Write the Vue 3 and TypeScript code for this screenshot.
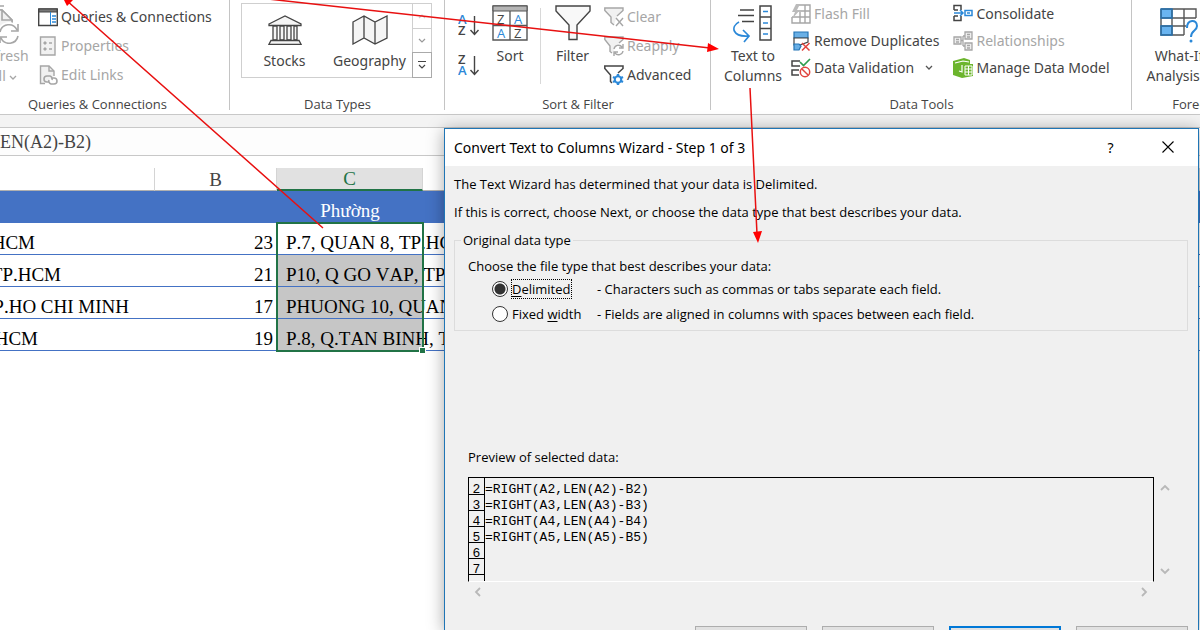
<script setup lang="ts">
import { ref } from 'vue'

interface SheetRow {
  address: string
  visible: number
  count: number
  ward: string
}

const rows: SheetRow[] = [
  { address: 'TP.HCM', visible: 35, count: 23, ward: 'P.7, QUAN 8, TP.HCM' },
  { address: 'TP.HCM', visible: 61, count: 21, ward: 'P10, Q GO VAP, TP.HCM' },
  { address: 'TP.HO CHI MINH', visible: 129, count: 17, ward: 'PHUONG 10, QUAN 3' },
  { address: 'TP.HCM', visible: 38, count: 19, ward: 'P.8, Q.TAN BINH, TP.HCM' },
]

const preview = [2, 3, 4, 5, 6, 7].map((n) => ({
  n,
  text: n < 6 ? `=RIGHT(A${n},LEN(A${n})-B${n})` : '',
}))

const fileType = ref('delimited')
const formula = ref('EN(A2)-B2)')
</script>

<template>
  <div class="app">
    <header class="ribbon">
      <section class="group queries">
        <div class="tools">
          <button class="big refresh off">
            <svg width="40" height="44" viewBox="0 0 40 44" fill="none" stroke="#a6a6a6" stroke-width="1.600">
              <path d="M0 6H20M0 10H18L28 20V26" />
              <path d="M0 10H18L28 20V40H0Z" fill="#f1f1f1" stroke="none" />
              <path d="M0 10H18L28 20V26M18 10V20H28" />
              <circle cx="25" cy="34" r="12" fill="#fff" stroke="none" />
              <path d="M16 32A9 9 0 0 1 33 30M34 24V31H27M34 36A9 9 0 0 1 17 38M16 43V37H23" />
              <path d="M0 40H12" />
            </svg>
            <span>Refresh</span>
            <span>All <svg class="chev" width="8" height="6" viewBox="0 0 8 6"><path d="M1 1L4 4L7 1" /></svg></span>
          </button>
          <div class="list">
            <button>
              <svg width="20" height="20" viewBox="0 0 20 20" fill="none"><path d="M.7 2H19.3V18.500H.7Z" fill="#fff" stroke="#444" stroke-width="1.400" /><path d="M1 2H19V5H1Z" fill="#777" stroke="#444" /><path d="M12.500 5V18" stroke="#2b88d8" /><path d="M14 9H18M14 12H18M14 15H18" stroke="#2b88d8" stroke-width="1.500" /></svg>
              Queries &amp; Connections
            </button>
            <button class="off">
              <svg width="20" height="20" viewBox="0 0 20 20" fill="none" stroke="#a6a6a6"><path d="M2.500 1H17V19H2.500Z" fill="#f1f1f1" stroke-width="1.400" /><path d="M6 6H8V8H6ZM6 12H8V14H6Z" fill="#a6a6a6" /><path d="M11 7H14M11 13H14" stroke-width="1.500" /></svg>
              Properties
            </button>
            <button class="off">
              <svg width="20" height="20" viewBox="0 0 20 20" fill="none" stroke="#a6a6a6" stroke-width="1.400"><path d="M7 18.500H2.500V1H11L16 6V11" fill="#f1f1f1" /><path d="M11 1V6H16" /><path d="M11 17H9A3 3 0 0 1 9 11H12A3 3 0 0 1 14 15M13 13H16A3 3 0 0 1 16 19H13A3 3 0 0 1 11 15" stroke-width="1.600" /></svg>
              Edit Links
            </button>
          </div>
        </div>
        <h2>Queries &amp; Connections</h2>
      </section>

      <section class="group types">
        <div class="tools">
          <div class="gallery">
            <button class="tile">
              <svg width="34" height="30" viewBox="0 0 34 30" fill="#f5f5f5" stroke="#444" stroke-width="1.300"><path d="M1 9L17 1L33 9V10.500H1Z" /><path d="M5 11H9V25H5ZM12 11H16V25H12ZM19 11H23V25H19ZM26 11H29V25H26Z" /><path d="M3 25.500H31L33 29.300H1Z" /></svg>
              <span>Stocks</span>
            </button>
            <button class="tile">
              <svg width="36" height="30" viewBox="0 0 36 30" fill="#f5f5f5" stroke="#444" stroke-width="1.300"><path d="M1 7L12 1L23 7L35 1V23L23 29L12 23L1 29ZM12 1V23M23 7V29" /></svg>
              <span>Geography</span>
            </button>
            <div class="spin">
              <button aria-label="Previous row"><svg width="8" height="6" viewBox="0 0 8 6"><path d="M1 5L4 2L7 5" stroke="#ccc" /></svg></button>
              <button aria-label="Next row"><svg width="8" height="6" viewBox="0 0 8 6"><path d="M1 1L4 4L7 1" stroke="#999" /></svg></button>
              <button class="more" aria-label="More data types"><svg width="10" height="10" viewBox="0 0 10 10"><path d="M1 1.500H9M2 5L5 8L8 5" stroke="#444" /></svg></button>
            </div>
          </div>
        </div>
        <h2>Data Types</h2>
      </section>

      <section class="group sorting">
        <div class="tools">
          <div class="az">
            <button aria-label="Sort A to Z">
              <svg width="22" height="24" viewBox="0 0 22 24"><text x="0" y="10" class="blue">A</text><text x="0" y="21">Z</text><path d="M16.500 2V20M12.500 16L16.500 20.500L20.500 16" /></svg>
            </button>
            <button aria-label="Sort Z to A">
              <svg width="22" height="24" viewBox="0 0 22 24"><text x="0" y="10">Z</text><text x="0" y="21" class="blue">A</text><path d="M16.500 2V20M12.500 16L16.500 20.500L20.500 16" /></svg>
            </button>
          </div>
          <button class="big sort">
            <svg width="36" height="36" viewBox="0 0 36 36"><path d="M1 1H35V35H1Z" fill="#fff" stroke="#555" stroke-width="1.400" /><path d="M1 1H35V6H1Z" fill="#b5b5b5" stroke="#555" /><path d="M18 6V35M1 20.500H35" stroke="#555" stroke-width="1.300" /><text x="5" y="19">Z</text><text x="22" y="19" class="blue">A</text><text x="5" y="33" class="blue">A</text><text x="22" y="33">Z</text></svg>
            <span>Sort</span>
          </button>
          <button class="big filter">
            <svg width="36" height="36" viewBox="0 0 36 36"><path d="M1 1H35V6L22 20V34.500H14V20L1 6Z" fill="#f8f8f8" stroke="#444" stroke-width="1.400" /></svg>
            <span>Filter</span>
          </button>
          <div class="list">
            <button class="off">
              <svg width="20" height="20" viewBox="0 0 20 20" fill="none" stroke="#a6a6a6" stroke-width="1.400"><path d="M10 18L7 15.500V10L.8 3.500V1H19V3.500L13 9" fill="#f1f1f1" /><path d="M12 11L19 19M19 11L12 19" /></svg>
              Clear
            </button>
            <button class="off">
              <svg width="20" height="20" viewBox="0 0 20 20" fill="none" stroke="#a6a6a6" stroke-width="1.400"><path d="M8 17L6 15.500V10L.8 3.500V1H19V3.500L15 7" fill="#f1f1f1" /><path d="M10 13A4.500 4.500 0 0 1 18 11M19 8V12H15M19 15A4.500 4.500 0 0 1 11 17M10 20V16H14" /></svg>
              Reapply
            </button>
            <button>
              <svg width="20" height="20" viewBox="0 0 20 20" fill="none" stroke="#444" stroke-width="1.500"><path d="M8 18L6.500 16.500V10L.8 3.500V1H19V3.500L14 8" /><circle cx="14" cy="14.500" r="3.200" stroke="#2b88d8" stroke-width="2" /><path d="M14 9V11M14 18V20M9 12L11 13M17 16L19 17M9 17L11 16M17 13L19 12" stroke="#2b88d8" stroke-width="2.400" /></svg>
              Advanced
            </button>
          </div>
        </div>
        <h2>Sort &amp; Filter</h2>
      </section>

      <section class="group data">
        <div class="tools">
          <button class="big split">
            <svg width="40" height="38" viewBox="0 0 40 38" fill="none" stroke="#444" stroke-width="1.400"><path d="M7 5H21M5 10.500H21M9 16.500H21" /><path d="M27 1H38V35H27ZM27 12H38M27 23.500H38" stroke-width="1.500" /><path d="M30 6.500H35M30 18H35M30 29H35M6 17C-3 22 0 32 15 31M10 25L16 31L11 37" stroke="#2b88d8" stroke-width="1.700" /></svg>
            <span>Text to</span>
            <span>Columns</span>
          </button>
          <div class="list tight">
            <button class="off">
              <svg width="20" height="20" viewBox="0 0 20 20" fill="none" stroke="#a6a6a6" stroke-width="1.400"><path d="M8 1H19V19H1V13M14 1V19M9 8V19M7 7H19M1 13H19" /><path d="M5 0L1 8H4L1 15L9 6H6L9 0Z" fill="#bbb" stroke="none" /></svg>
              Flash Fill
            </button>
            <button>
              <svg width="20" height="20" viewBox="0 0 20 20" fill="none" stroke="#444" stroke-width="1.200"><path d="M3 1H17V7H3Z" fill="#69afe5" stroke="#2474b5" /><path d="M3 7H17V11L9 14H3Z" fill="#fff" /><path d="M3 13H8L10 15L8 19H3Z" fill="#69afe5" stroke="#2474b5" /><path d="M11 12L18.500 19.500M18.500 12L11 19.500" stroke="#e0443e" stroke-width="1.500" /></svg>
              Remove Duplicates
            </button>
            <button>
              <svg width="20" height="20" viewBox="0 0 20 20" fill="none" stroke="#444" stroke-width="1.500"><path d="M9 3H1V8H9M8 12H1V17H8" /><path d="M9 4L12.500 7.500L19 1" stroke="#2e9e4f" stroke-width="1.700" /><circle cx="14" cy="14" r="4.700" stroke="#e0443e" /><path d="M10.700 10.700L17.300 17.300" stroke="#e0443e" /></svg>
              Data Validation
              <svg class="chev drop" width="8" height="6" viewBox="0 0 8 6"><path d="M1 1L4 4L7 1" /></svg>
            </button>
          </div>
          <div class="list tight second">
            <button>
              <svg width="20" height="20" viewBox="0 0 20 20" fill="none" stroke="#444" stroke-width="1.500"><path d="M1 6V1.500H8V6M1 12V16.500H8V12M1 6H5M1 12H5" /><path d="M1 9H10M7 6L10 9L7 12M12 6.500H19V11.500H12ZM14 9H17" stroke="#2b88d8" /></svg>
              Consolidate
            </button>
            <button class="off">
              <svg width="20" height="20" viewBox="0 0 20 20" fill="#eee" stroke="#a6a6a6" stroke-width="1.300"><path d="M1 6H8V13H1ZM12 1H19V8H12ZM12 12H19V19H12ZM8 9.500H10M10 5V15M10 5H12M10 15H12M3 8.500H6M3 11H6M14 3.500H17M14 6H17M14 14.500H17M14 17H17" /></svg>
              Relationships
            </button>
            <button>
              <svg width="20" height="20" viewBox="0 0 20 20" fill="none"><path d="M0 3L11 0L17 2V6H20V18L9 20L0 17Z" fill="#6cb52d" /><path d="M2 5L10 3L16 4M9 7V14L6 13" stroke="#fff" stroke-width="1.200" /><path d="M12 8H19V17H12ZM12 11H19M12 14H19M15.500 8V17" stroke="#fff" /></svg>
              Manage Data Model
            </button>
          </div>
        </div>
        <h2>Data Tools</h2>
      </section>

      <section class="group forecast">
        <div class="tools">
          <button class="big whatif">
            <svg width="38" height="36" viewBox="0 0 38 36" fill="none"><path d="M1 1H12V10H1ZM1 18H12V27H1Z" fill="#69b4f0" /><path d="M1 1H36V10M1 1V27H24M1 10H36M1 18H26M12 1V27M24 1V27" stroke="#555" stroke-width="1.400" /><path d="M1 1H12V10H1ZM1 18H12V27H1Z" stroke="#2474b5" stroke-width="1.400" /><path d="M27 20C27 11 37 11 37 18C37 23 31 22 31 29" stroke="#2b88d8" stroke-width="2" /><circle cx="31" cy="33" r="1.500" fill="#2b88d8" /></svg>
            <span>What-If</span>
            <span>Analysis <svg class="chev" width="8" height="6" viewBox="0 0 8 6"><path d="M1 1L4 4L7 1" /></svg></span>
          </button>
        </div>
        <h2>Forecast</h2>
      </section>
    </header>

    <div class="formula"><input v-model="formula" aria-label="Formula bar" /></div>

    <main class="sheet">
      <table>
        <colgroup><col class="a" /><col class="b" /><col class="c" /><col /></colgroup>
        <thead>
          <tr class="letters"><th></th><th>B</th><th class="on">C</th><th></th></tr>
          <tr class="heading"><th></th><th></th><th>Phường</th><th></th></tr>
        </thead>
        <tbody>
          <tr v-for="(row, i) in rows" :key="i">
            <td><div class="clip" :style="{ width: row.visible + 'px' }">{{ row.address }}</div></td>
            <td class="num">{{ row.count }}</td>
            <td class="ward" :class="{ shaded: i > 0 }">{{ row.ward }}<i v-if="i === 0" class="selection"></i></td>
            <td></td>
          </tr>
        </tbody>
      </table>
    </main>

    <div class="dialog" role="dialog" aria-labelledby="wizard-title">
      <div class="titlebar">
        <h1 id="wizard-title">Convert Text to Columns Wizard - Step 1 of 3</h1>
        <button aria-label="Help">?</button>
        <button aria-label="Close"><svg width="12" height="12" viewBox="0 0 12 12"><path d="M.5 .5L11.500 11.500M11.500 .5L.5 11.500" stroke="#000" stroke-width="1.100" /></svg></button>
      </div>
      <div class="body">
        <p>The Text Wizard has determined that your data is Delimited.</p>
        <p>If this is correct, choose Next, or choose the data type that best describes your data.</p>
        <fieldset>
          <legend>Original data type</legend>
          <p class="hint">Choose the file type that best describes your data:</p>
          <div class="choice">
            <input id="delimited" v-model="fileType" type="radio" name="kind" value="delimited" />
            <label for="delimited"><span class="focus"><u>D</u>elimited</span></label>
            <span>- Characters such as commas or tabs separate each field.</span>
          </div>
          <div class="choice">
            <input id="fixed" v-model="fileType" type="radio" name="kind" value="fixed" />
            <label for="fixed"><span>Fixed <u>w</u>idth</span></label>
            <span>- Fields are aligned in columns with spaces between each field.</span>
          </div>
        </fieldset>
        <p class="caption">Preview of selected data:</p>
        <div class="preview">
          <div class="pane">
            <div v-for="line in preview" :key="line.n" class="line"><b>{{ line.n }}</b><span>{{ line.text }}</span></div>
            <div class="line"><b></b></div>
          </div>
          <div class="vbar">
            <button aria-label="Scroll up"><svg width="10" height="7" viewBox="0 0 10 7"><path d="M1 6L5 2L9 6" /></svg></button>
            <button aria-label="Scroll down"><svg width="10" height="7" viewBox="0 0 10 7"><path d="M1 1L5 5L9 1" /></svg></button>
          </div>
          <div class="hbar">
            <button aria-label="Scroll left"><svg width="7" height="10" viewBox="0 0 7 10"><path d="M6 1L2 5L6 9" /></svg></button>
            <button aria-label="Scroll right"><svg width="7" height="10" viewBox="0 0 7 10"><path d="M1 1L5 5L1 9" /></svg></button>
          </div>
        </div>
        <div class="actions">
          <button aria-label="Cancel"></button>
          <button aria-label="Back"></button>
          <button class="primary" aria-label="Next"></button>
          <button aria-label="Finish"></button>
        </div>
      </div>
    </div>

    <svg class="arrows" width="1200" height="630" viewBox="0 0 1200 630" fill="none" stroke="#e81010" stroke-width="1.500">
      <path d="M323 228L66 0M268 -1L710 48M750 88L757 234" />
      <path d="M62 -4L73 0L67 6ZM719 49L707 52L708 43ZM758 243L753 232L762 231Z" fill="#f00" stroke="none" />
    </svg>
  </div>
</template>

<style>
body { margin: 0; }
</style>

<style scoped>
.app { position: relative; height: 100vh; overflow: hidden; background: #fff; color: #444; font-family: "Noto Sans", "Open Sans", sans-serif; font-size: 14px; line-height: 20px; }
button { padding: 0; border: 0; background: none; color: inherit; font: inherit; white-space: nowrap; }
h1, h2, p { margin: 0; font-weight: 400; }
svg { flex: none; }

.ribbon { display: flex; height: 114px; border-bottom: 1px solid #c8c8c8; overflow: hidden; }
.group { flex: none; display: flex; flex-direction: column; box-sizing: border-box; background: linear-gradient(#c4c4c4, #c4c4c4) right top / 1px 110px no-repeat; }
.tools { display: flex; height: 94px; }
.group h2 { font: 13px/20px "Open Sans", sans-serif; text-align: center; }
.queries { width: 265px; margin-left: -35px; }
.types { width: 215px; }
.sorting { width: 266px; }
.data { width: 421px; }
.forecast { flex: 1 0 132px; background: none; }
.big { display: flex; flex-direction: column; align-items: center; }
.big > span { height: 20px; }
.big > svg { margin-top: 5px; margin-bottom: 5px; }
.off { color: #a6a6a6; }
.chev path { fill: none; stroke: #555; stroke-width: 1.300; }
.off .chev path { stroke: #a6a6a6; }
.refresh { width: 73px; padding-left: 4px; }
.refresh > svg { margin: 0 0 2px; }
.list { display: flex; flex-direction: column; padding-top: 7px; gap: 9px; }
.list button { display: flex; align-items: center; gap: 3px; height: 20px; }
.list.tight { padding-top: 4px; gap: 7px; }
.list .drop { margin-left: 8px; }

.gallery { display: flex; box-sizing: border-box; width: 191px; height: 75px; margin: 3px 0 0 11px; border: 1px solid #cfcfcf; }
.tile { flex: 1; display: flex; flex-direction: column; align-items: center; gap: 6px; padding-top: 11px; }
.spin { display: flex; flex-direction: column; width: 18px; border-left: 1px solid #cfcfcf; }
.spin button { flex: 1; display: flex; align-items: center; justify-content: center; border-bottom: 1px solid #cfcfcf; }
.spin .more { border: 1px solid #aaa; margin: -1px; }
.spin path { fill: none; stroke-width: 1.200; }

.az { display: flex; flex-direction: column; gap: 16px; padding: 14px 0 0 13px; width: 22px; }
.az button, .az svg { display: block; height: 24px; }
.az text, .sort text { font: 13px "Open Sans", sans-serif; fill: #444; }
.az text { font-weight: 600; }
.az text.blue, .sort text.blue { fill: #2b88d8; }
.az path { fill: none; stroke: #444; stroke-width: 1.400; }
.sort { box-sizing: border-box; width: 61px; padding-right: 1px; background: linear-gradient(#d8d8d8, #d8d8d8) right 8px / 1px 76px no-repeat; }
.filter { width: 63px; }
.split { width: 80px; box-sizing: border-box; padding-left: 4px; }
.split > svg { margin-bottom: 3px; }
.whatif { width: 94px; }
.whatif > svg { margin-top: 8px; margin-bottom: 2px; }
.second { margin-left: 14px; }

.formula { margin-top: 12px; border: solid #c8c8c8; border-width: 1px 0; height: 27px; background: #fdfdfd; box-shadow: 0 -12px #f3f3f3; }
.formula input { box-sizing: border-box; width: 100%; height: 27px; padding: 2px 0 0; border: 0; background: none; color: #444; font: 18px "Liberation Serif", serif; }

.sheet { padding-top: 12px; color: #000; font: 19px/24px "Liberation Serif", serif; font-kerning: none; }
table { width: 100%; table-layout: fixed; border-collapse: separate; border-spacing: 0; }
.a { width: 155px; }
.b { width: 122px; }
.c { width: 146px; }
th, td { padding: 0; font-weight: 400; white-space: nowrap; }
.letters th { box-sizing: border-box; height: 23px; line-height: 21px; color: #444; border-bottom: 1px solid #b0b0b0; border-right: 1px solid #d4d4d4; }
.letters .on { background: #e1e1e1; color: #217346; border-bottom: 2px solid #217346; }
.heading th { height: 24px; padding-top: 8px; background: #4472c4; color: #fff; }
td { height: 23px; padding-top: 8px; border-bottom: 1px solid #4472c4; line-height: 23px; }
.clip { display: flex; justify-content: flex-end; overflow: hidden; height: 23px; }
.num { text-align: right; padding-right: 4px; }
.ward { position: relative; padding-left: 9px; }
.shaded { background: #c6c6c6; }
.selection { position: absolute; z-index: 1; left: -1px; right: -1px; top: -1px; height: 130px; box-sizing: border-box; border: 2px solid #217346; }
.selection::after { content: ""; position: absolute; right: -4px; bottom: -4px; width: 5px; height: 5px; background: #217346; border: 1px solid #fff; }

.dialog { position: absolute; z-index: 2; inset: 128px 1px 0 444px; display: flex; flex-direction: column; border: 1px solid #1f75b5; border-bottom: 0; background: #f0f0f0; box-shadow: 0 2px 16px rgba(0, 0, 0, .35); color: #000; font: 13px/16px "Open Sans", sans-serif; overflow: hidden; }
.titlebar { flex: none; display: flex; align-items: center; height: 37px; padding: 0 2px 0 9px; background: #fff; font-family: "Noto Sans", sans-serif; }
.titlebar h1 { flex: 1; font-size: 14px; }
.titlebar button { width: 57px; font-size: 14px; }
.body { padding: 10px 10px 0 9px; }
.body > p + p { margin-top: 12px; }
fieldset { margin: 12px 0 0; padding: 0 0 4px 13px; border: 1px solid #dcdcdc; min-width: 0; }
legend { margin-left: -7px; padding: 0 2px; }
.hint { margin: 10px 0 2px; }
.choice { display: flex; align-items: center; height: 25px; padding-left: 24px; }
.choice input { appearance: none; box-sizing: border-box; width: 16px; height: 16px; margin: 0 3px 0 0; border: 1px solid #333; border-radius: 50%; background: #fff; }
.choice input:checked { background: radial-gradient(circle, #333 5px, #fff 6px); }
.choice label { width: 86px; }
.choice label span { border: 1px solid transparent; }
.choice label .focus { border: 1px dotted #000; }
u { text-underline-offset: 2px; }
.body .caption { margin: 118px 0 12px 14px; }
.preview { display: grid; grid-template-columns: 1fr 21px; margin: 0 13px 0 14px; }
.pane { height: 103px; overflow: hidden; border: 1px solid #000; border-bottom-color: #fff; font: 13px/16px "Liberation Mono", monospace; }
.line { display: flex; height: 16px; }
.line b { box-sizing: border-box; width: 16px; height: 16px; padding-top: 3px; border: solid #000; border-width: 0 1px 1px 0; font-weight: 400; text-align: center; }
.line span { padding-top: 3px; }
.line:first-child, .line:first-child b { height: 17px; }
.line:first-child > * { padding-top: 4px; }
.vbar { display: flex; flex-direction: column; justify-content: space-between; padding: 7px 0; }
.vbar button, .hbar button { display: flex; justify-content: center; }
.vbar path, .hbar path { fill: none; stroke: #b8b8b8; stroke-width: 1.800; }
.hbar { display: flex; justify-content: space-between; padding: 5px 6px; }
.actions { display: flex; justify-content: flex-end; gap: 15px; margin-top: 24px; }
.actions button { box-sizing: border-box; width: 112px; height: 26px; border: 1px solid #adadad; background: #e1e1e1; }
.actions .primary { border: 2px solid #0078d7; }

.arrows { position: absolute; z-index: 3; inset: 0; pointer-events: none; }
</style>
